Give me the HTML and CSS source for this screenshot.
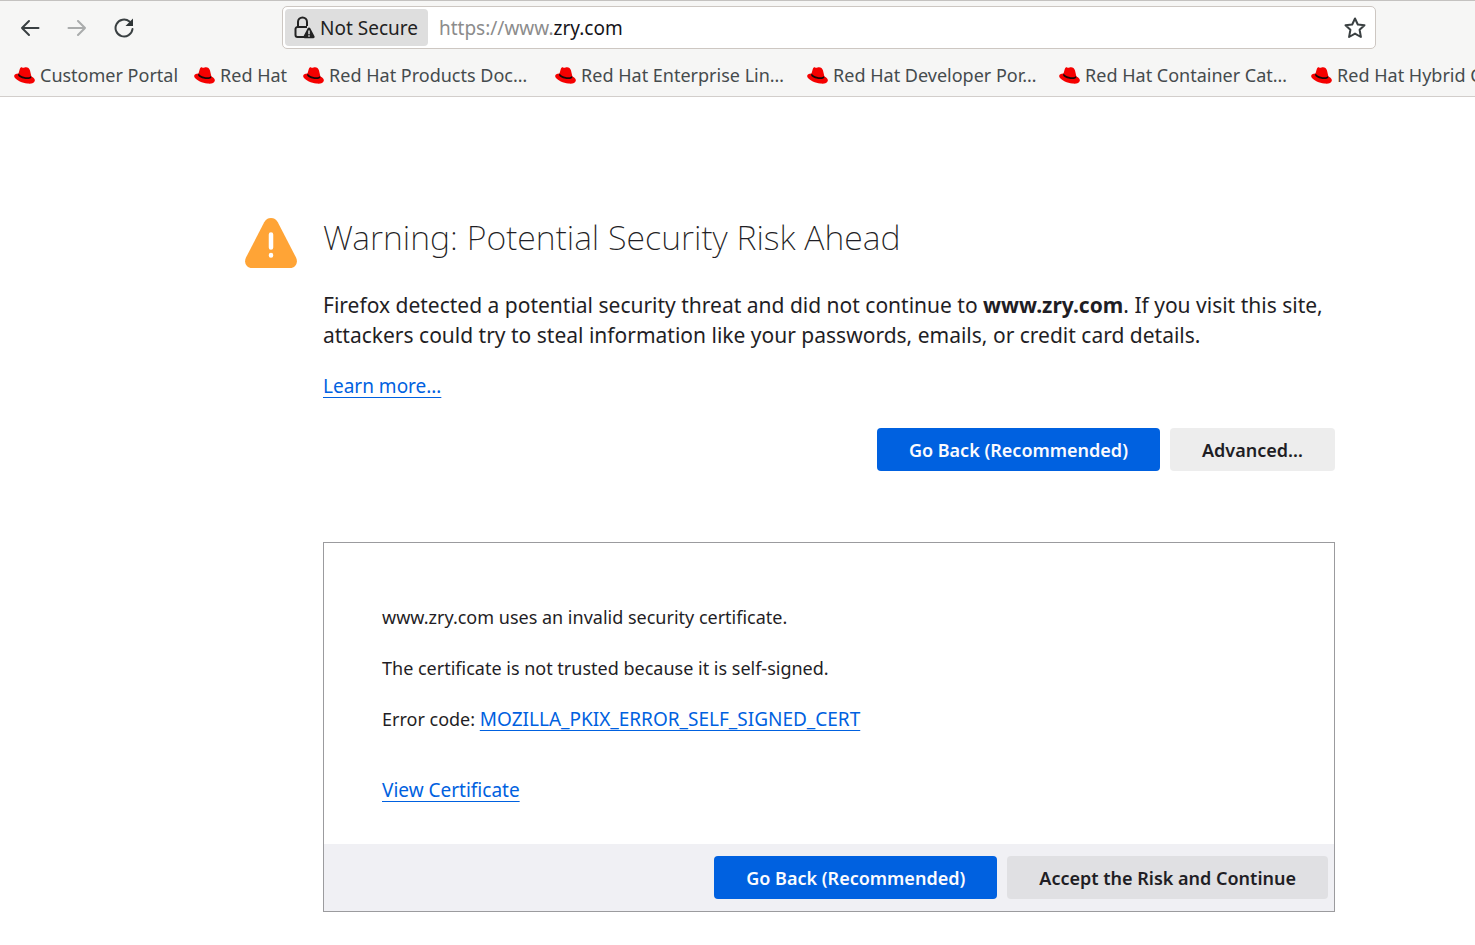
FILE: index.html
```html
<!DOCTYPE html>
<html lang="en">
<head>
    <meta charset="UTF-8">
    <meta name="viewport" content="width=device-width, initial-scale=1.0">
    <title>Warning: Potential Security Risk Ahead</title>
    <link rel="stylesheet" href="styles.css">
</head>
<body>
    <!-- shared favicon for the bookmarks -->
    <svg class="sprite" width="0" height="0" aria-hidden="true">
        <symbol id="hat" viewBox="0 0 21 17">
            <path fill="#f50000" d="M4.500 6.500 5.800 2C6.200.8 7 .2 8 .4c1 .2 1.500.4 2.500 0 1.500-.5 3-.3 4 .6.8.700 1.200 1.500 1.500 2.500l1.400 6c2.400 1.200 3.700 2.600 3.400 4.300-.4 2.300-3.600 3.200-7.500 2.700C8.500 15.900 2.500 13.500.6 10.500-.6 8.300.8 6.600 4.500 6.500Z"/>
            <path fill="#190808" d="M4.500 6.500c1 1.600 3 2.700 5.300 3.300 3 .8 6 .8 7.300-.7l.3 1.200c-.2 1.700-3.800 2.300-8 1.200C6 10.700 3.700 9 4.200 7.500Z"/>
        </symbol>
    </svg>

    <header class="browser">
        <div class="toolbar">
            <div class="nav-buttons">
                <button class="icon-button" aria-label="Back">
                    <svg width="20" height="18" viewBox="0 0 20 18"><path d="M18.500 9H2M9 2 2 9l7 7"/></svg>
                </button>
                <button class="icon-button" aria-label="Forward" disabled>
                    <svg width="20" height="18" viewBox="0 0 20 18"><path d="M1.500 9H18M11 2l7 7-7 7"/></svg>
                </button>
                <button class="icon-button" aria-label="Reload">
                    <svg width="20" height="20" viewBox="0 0 20 20"><path d="M15.500 3.500A8.500 8.500 0 1 0 18.500 11"/><path class="solid" d="M19 .5V8h-7.500Z"/></svg>
                </button>
            </div>
            <div class="url-bar">
                <button class="identity">
                    <svg width="22" height="24" viewBox="0 0 22 24">
                        <path fill="none" stroke="#222" stroke-width="2" d="M4 11V6a4.500 4.500 0 0 1 9 0v4M10 21H3.500A2 2 0 0 1 1.500 19v-6a2 2 0 0 1 2-2H13"/>
                        <path fill="#222" d="M15 11.500c.6 0 1 .2 1.300.8l4.200 8c.5 1-.1 1.900-1.200 1.900h-8.600c-1.100 0-1.700-.9-1.200-1.900l4.200-8c.3-.6.7-.8 1.300-.8Z"/>
                        <path stroke="#dedede" stroke-width="1.500" d="M15 14.500v3.700M15 19.300v1.500"/>
                    </svg>
                    Not Secure
                </button>
                <div class="url">https://www.<span class="domain">zry.com</span></div>
                <button class="icon-button star" aria-label="Bookmark this page">
                    <svg width="22" height="22" viewBox="0 0 22 22"><path d="m11 1.500 2.800 6 6.700.7-4.900 4.600 1.300 7.200-5.900-3.400L5.100 20l1.300-7.200L1.500 8.200l6.700-.7Z"/></svg>
                </button>
            </div>
        </div>
        <nav class="bookmarks">
            <a href="#"><svg><use href="#hat"/></svg><span>Customer Portal</span></a>
            <a href="#"><svg><use href="#hat"/></svg><span>Red Hat</span></a>
            <a href="#" class="wide"><svg><use href="#hat"/></svg><span>Red Hat Products Doc…</span></a>
            <a href="#" class="wide"><svg><use href="#hat"/></svg><span>Red Hat Enterprise Lin…</span></a>
            <a href="#" class="wide"><svg><use href="#hat"/></svg><span>Red Hat Developer Por…</span></a>
            <a href="#" class="wide"><svg><use href="#hat"/></svg><span>Red Hat Container Cat…</span></a>
            <a href="#" class="wide"><svg><use href="#hat"/></svg><span>Red Hat Hybrid C</span></a>
        </nav>
    </header>

    <main class="page">
        <svg class="warning-icon" width="52" height="50" viewBox="0 0 52 50">
            <path fill="#ffa436" d="M26 0c3 0 5.300 1.500 6.800 4.300L51 39.500C53.500 44.500 50.500 50 45 50H7C1.500 50-1.500 44.500 1 39.500L19.200 4.300C20.700 1.500 23 0 26 0Z"/>
            <path stroke="#fff" stroke-width="4.500" stroke-linecap="round" d="M26 16.500v13M26 37v.4"/>
        </svg>
        <div class="content">
            <h1>Warning: Potential Security Risk Ahead</h1>
            <p class="intro">Firefox detected a potential security threat and did not continue to <b>www.zry.com</b>. If you visit this site, attackers could try to steal information like your passwords, emails, or credit card details.</p>
            <p class="learn-more"><a href="#">Learn more…</a></p>
            <div class="buttons">
                <button class="primary">Go Back (Recommended)</button>
                <button>Advanced…</button>
            </div>

            <section class="advanced-panel">
                <div class="details">
                    <p>www.zry.com uses an invalid security certificate.</p>
                    <p>The certificate is not trusted because it is self-signed.</p>
                    <p>Error code: <a href="#">MOZILLA_PKIX_ERROR_SELF_SIGNED_CERT</a></p>
                    <p class="view-cert"><a href="#">View Certificate</a></p>
                </div>
                <div class="buttons">
                    <button class="primary">Go Back (Recommended)</button>
                    <button>Accept the Risk and Continue</button>
                </div>
            </section>
        </div>
    </main>
</body>
</html>
```
FILE: styles.css
```css
* {
    box-sizing: border-box;
}

body {
    margin: 0;
    background-color: #fff;
    color: #1f1e25;
    font-family: "Noto Sans", sans-serif;
    font-size: 18px;
    line-height: 28px;
    overflow-x: hidden;
}

button {
    font: inherit;
    color: inherit;
    border: none;
    cursor: pointer;
}

.sprite {
    display: block;
}

/* browser toolbar */
.browser {
    background-color: #f6f6f5;
    border-top: 1px solid #c4c2c0;
    border-bottom: 1px solid #d2cecb;
    padding-bottom: 7px;
}

.toolbar {
    display: flex;
    align-items: center;
    justify-content: space-between;
    padding: 5px 99px 0 20px;
}

.nav-buttons {
    display: flex;
    gap: 27px;
}

.icon-button {
    display: flex;
    align-items: center;
    padding: 0;
    background: none;
}

.icon-button svg {
    fill: none;
    stroke: #3a4042;
    stroke-width: 2;
    stroke-linecap: round;
    stroke-linejoin: round;
}

.icon-button .solid {
    fill: #2e3436;
    stroke: none;
}

.icon-button:disabled {
    opacity: 0.4;
}

.url-bar {
    display: flex;
    align-items: center;
    flex: 1;
    margin-left: 148px;
    height: 43px;
    padding: 2px 9px 2px 2px;
    background-color: #fff;
    border: 1px solid #cdc7c2;
    border-radius: 5px;
    font-size: 19px;
}

.identity {
    display: flex;
    align-items: center;
    gap: 4px;
    height: 37px;
    padding: 0 10px 0 9px;
    background-color: #dedede;
    border-radius: 4px;
    color: #222;
}

.url {
    flex: 1;
    margin-left: 11px;
    color: #8c8c8c;
}

.domain {
    color: #15141a;
}

.bookmarks {
    display: flex;
    gap: 16px;
    padding: 12px 0 0 14px;
    overflow: hidden;
}

.bookmarks a {
    display: flex;
    align-items: center;
    flex: none;
    gap: 5px;
    color: #454b4d;
    text-decoration: none;
    white-space: nowrap;
}

.bookmarks .wide {
    width: 236px;
}

.bookmarks svg {
    width: 21px;
    height: 17px;
}

/* error page */
.page {
    display: flex;
    gap: 26px;
    padding: 120px 140px 0 245px;
}

.warning-icon {
    flex: none;
    margin-top: 1px;
}

.content {
    flex: 1;
}

h1 {
    margin: 0;
    font-size: 34px;
    font-weight: 200;
    line-height: 40px;
}

.intro {
    margin: 33px 0 22px;
    font-size: 21px;
    line-height: 30px;
}

.page a {
    color: #0061e0;
    font-size: 19px;
    text-underline-offset: 4px;
}

.learn-more {
    margin: 0;
}

.buttons {
    display: flex;
    justify-content: flex-end;
    gap: 10px;
}

.content > .buttons {
    margin-top: 28px;
}

.buttons button {
    height: 43px;
    padding: 0 32px;
    background-color: #ededed;
    border-radius: 4px;
    font-weight: 600;
}

.buttons .primary {
    background-color: #0061e0;
    color: #fbfbfe;
}

.advanced-panel {
    margin-top: 71px;
    border: 1px solid #9b9b9e;
}

.details {
    padding: 60px 58px 40px;
}

.details p {
    margin: 0 0 23px;
}

.details .view-cert {
    margin: 43px 0 0;
}

.advanced-panel .buttons {
    padding: 12px 6px;
    background-color: #f0f0f4;
}

.advanced-panel .buttons button:not(.primary) {
    background-color: #e0e0e3;
}
```
